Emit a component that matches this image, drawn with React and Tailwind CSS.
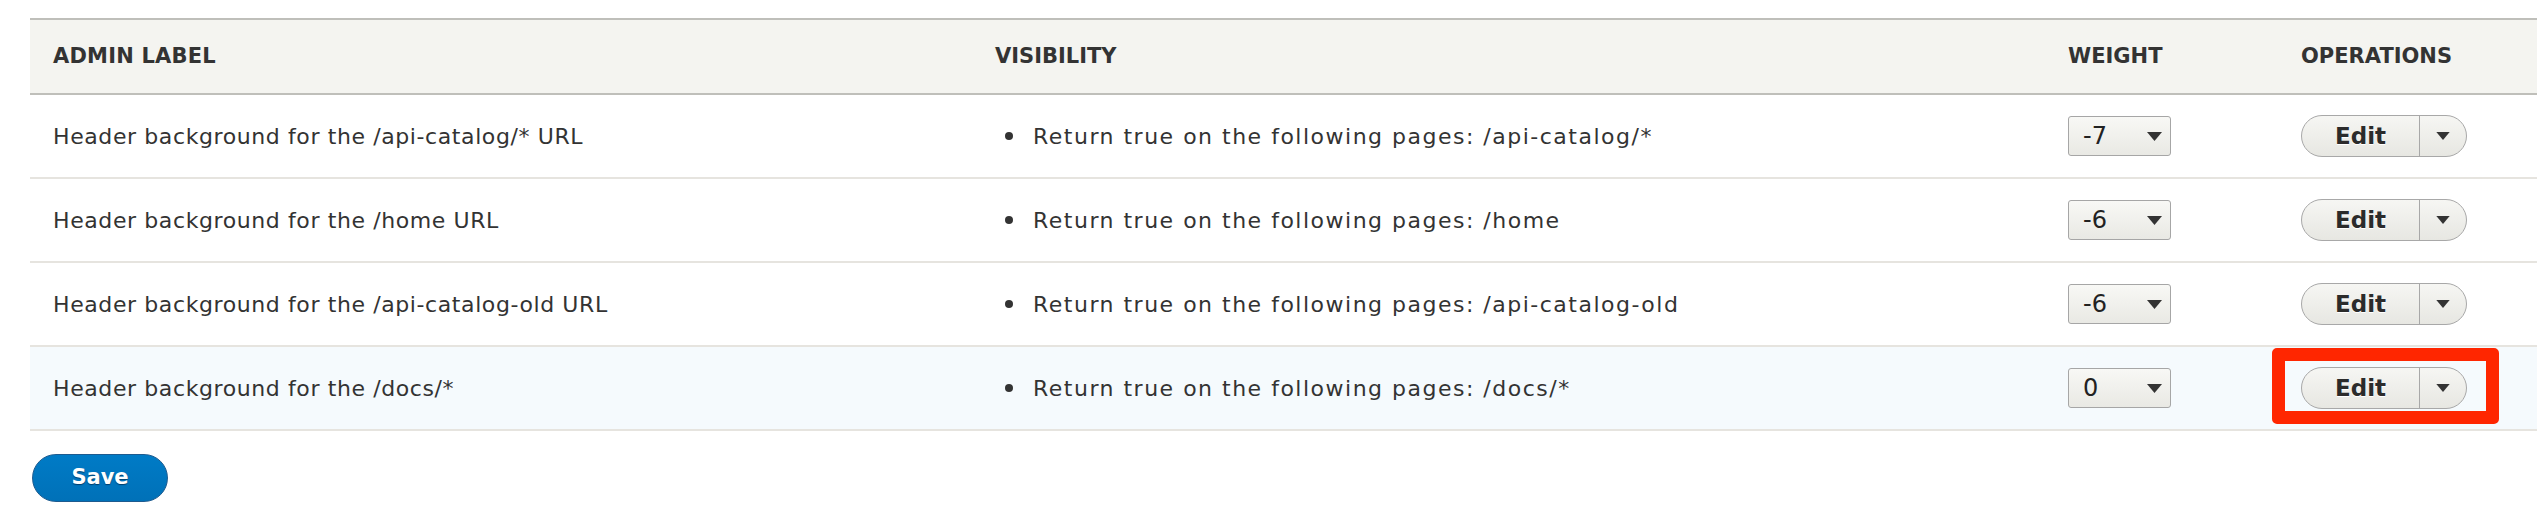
import React from 'react'

const rows = [
  { label: 'Header background for the /api-catalog/* URL', pages: '/api-catalog/*', weight: '-7' },
  { label: 'Header background for the /home URL', pages: '/home', weight: '-6' },
  { label: 'Header background for the /api-catalog-old URL', pages: '/api-catalog-old', weight: '-6' },
  { label: 'Header background for the /docs/*', pages: '/docs/*', weight: '0', active: true },
]

const cols = 'grid grid-cols-[942px_1073px_233px_1fr] items-center'

const Triangle = ({ w, h }) => (
  <svg width={w} height={h} viewBox="0 0 10 6" className="block">
    <path d="M0 0 L10 0 L5 6 Z" fill="#333" />
  </svg>
)

const WeightSelect = ({ value }) => (
  <div className="w-[103px] h-[40px] flex items-center justify-between pl-[14px] pr-[8px] border border-[#a6a6a6] rounded-[3px] bg-gradient-to-b from-[#f8f8f5] to-[#e9e9e4] text-[24px] text-[#222]">
    <span>{value}</span>
    <Triangle w={15} h={9} />
  </div>
)

const EditButton = () => (
  <div className="flex w-[166px] h-[42px] border-[1.5px] border-[#a8a8a8] rounded-full overflow-hidden bg-gradient-to-b from-[#f6f6f3] to-[#e7e7e2]">
    <div className="w-[117px] flex items-center justify-center text-[23px] font-bold text-[#2b2b2b] [text-shadow:0_1px_0_#fff]">Edit</div>
    <div className="flex-1 flex items-center justify-center border-l-[1.5px] border-[#a8a8a8]">
      <Triangle w={14} h={8} />
    </div>
  </div>
)

export default function App() {
  return (
    <div className="w-[2537px] h-[530px] bg-white pt-[18px] pl-[30px] overflow-hidden font-['DejaVu_Sans',sans-serif] text-[#333]">
      <div className="w-[2520px]">
        <div className={`${cols} h-[77px] bg-[#f4f4f0] border-y-2 border-[#bfbfba] text-[21px] font-bold uppercase text-[#333]`}>
          <div className="pl-[23px] tracking-[0.2px]">Admin label</div>
          <div className="pl-[23px]">Visibility</div>
          <div className="pl-[23px]">Weight</div>
          <div className="pl-[23px]">Operations</div>
        </div>
        {rows.map((r) => (
          <div
            key={r.label}
            className={`${cols} h-[84px] border-b-2 border-[#e6e4df] text-[22px] ${r.active ? 'bg-[#f5fafd]' : 'bg-white'}`}
          >
            <div className="pl-[23px] tracking-[0.6px]">{r.label}</div>
            <div className="pl-[33px] flex items-center">
              <span className="w-[8px] h-[8px] rounded-full bg-[#333] mr-[20px]" />
              <span className="tracking-[1.5px]">Return true on the following pages: {r.pages}</span>
            </div>
            <div className="pl-[23px]">
              <WeightSelect value={r.weight} />
            </div>
            <div className="pl-[23px] relative">
              <EditButton />
              {r.active && (
                <div className="absolute left-[-6px] top-[-19px] w-[227px] h-[76px] border-[13px] border-[#ff2600] rounded-[5px]" />
              )}
            </div>
          </div>
        ))}
        <button className="mt-[23px] ml-[2px] w-[136px] h-[48px] rounded-full border border-[#1e5b8f] bg-gradient-to-b from-[#007bc6] to-[#0071b8] text-white font-bold text-[21px] [text-shadow:0_1px_1px_#003d6b]">
          Save
        </button>
      </div>
    </div>
  )
}
